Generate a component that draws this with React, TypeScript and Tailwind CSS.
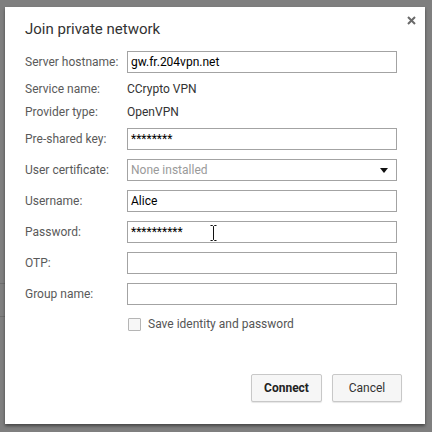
import React from "react";

const labelCls = "w-[102px] shrink-0 text-[12px] text-[#5a5a5a]";
const inputCls =
  "w-[270px] h-[22px] border border-[#a3a3a3] bg-white px-[3px] text-[12px] text-black flex items-center";

function Row({ label, children, tall = true }: { label: string; children: React.ReactNode; tall?: boolean }) {
  return (
    <div className={`flex items-center ${tall ? "h-[22px]" : "h-[14px]"}`}>
      <div className={labelCls}>{label}</div>
      {children}
    </div>
  );
}

export default function App() {
  return (
    <div
      className="relative w-[432px] h-[432px] overflow-hidden bg-[#7f7f7f] pl-[5px] pt-[7px]"
      style={{ fontFamily: "Roboto, 'Noto Sans', sans-serif" }}
    >
      {/* edge of the page behind the overlay */}
      <div className="absolute left-0 top-[283px] w-[6px] h-[34px] border-y border-[#6e6e6e]" />

      <div className="relative flex h-[417px] w-[420px] flex-col bg-white pl-[20px] pr-[28px] pt-[12px] pb-[22px] shadow-[0_2px_3px_rgba(0,0,0,0.45)]">
        <button className="absolute left-[401px] top-[8px] flex h-[10px] w-[10px] items-center justify-center">
          <svg width="9" height="9" viewBox="0 0 9 9">
            <path d="M1 1L8 8M8 1L1 8" stroke="#6a6a6a" strokeWidth="2" />
          </svg>
        </button>

        <h1 className="h-[20px] text-[15px] leading-[20px] text-[#333]">Join private network</h1>

        <div className="mt-[12px] flex flex-col gap-[9px]">
          <Row label="Server hostname:">
            <div className={inputCls}>gw.fr.204vpn.net</div>
          </Row>
          <Row label="Service name:" tall={false}>
            <div className="text-[12px] text-[#333]">CCrypto VPN</div>
          </Row>
          <Row label="Provider type:" tall={false}>
            <div className="text-[12px] text-[#333]">OpenVPN</div>
          </Row>
          <Row label="Pre-shared key:">
            <div className={inputCls}>********</div>
          </Row>
          <Row label="User certificate:">
            <div className={`${inputCls} justify-between pr-[8px]`}>
              <span className="text-[#9a9a9a]">None installed</span>
              <svg width="8" height="5" viewBox="0 0 8 5">
                <path d="M0 0H8L4 5Z" fill="#111" />
              </svg>
            </div>
          </Row>
          <Row label="Username:">
            <div className={inputCls}>Alice</div>
          </Row>
          <Row label="Password:">
            <div className={`${inputCls} relative border-[#4d90e6]`}>
              **********
              <svg className="absolute left-[82px] top-[3px]" width="7" height="16" viewBox="0 0 7 16">
                <path d="M0.5 0.5H2.5L3.5 1.5L4.5 0.5H6.5M3.5 1.5V14.5M0.5 15.5H2.5L3.5 14.5L4.5 15.5H6.5" stroke="#111" strokeWidth="1" fill="none" />
              </svg>
            </div>
          </Row>
          <Row label="OTP:">
            <div className={inputCls} />
          </Row>
          <Row label="Group name:">
            <div className={inputCls} />
          </Row>
        </div>

        <label className="mt-[13px] ml-[103px] flex items-center gap-[7px] leading-[13px]">
          <span className="h-[13px] w-[13px] rounded-[1px] border border-[#b5b5b5] bg-[#f7f7f7]" />
          <span className="text-[12px] text-[#555]">Save identity and password</span>
        </label>

        <div className="mt-auto mr-[-5px] flex justify-end gap-[10px]">
          <button className="h-[28px] w-[71px] rounded-[2px] border border-[#c8c8c8] bg-[#f6f6f6] text-[12px] font-bold text-[#222] shadow-[0_1px_1px_rgba(0,0,0,0.1)]">
            Connect
          </button>
          <button className="h-[28px] w-[70px] rounded-[2px] border border-[#c8c8c8] bg-[#f6f6f6] text-[12px] text-[#333] shadow-[0_1px_1px_rgba(0,0,0,0.1)]">
            Cancel
          </button>
        </div>
      </div>
    </div>
  );
}
